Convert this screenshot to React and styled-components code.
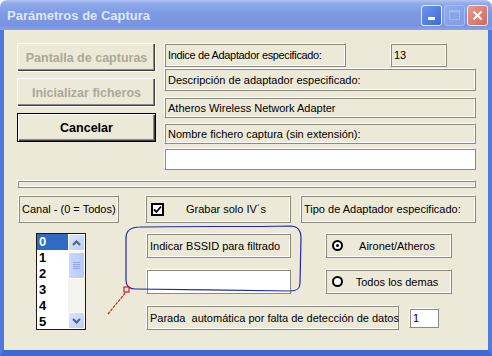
import React from 'react'
import styled, { createGlobalStyle, css } from 'styled-components'

const Global = createGlobalStyle`
  html, body { margin: 0; padding: 0; background: #fff; }
  body { font-family: "Liberation Sans", Arial, sans-serif; font-size: 11px; color: #000; }
`

// shared 3D frame used by the static labels, the boxes and the separator
const frame = css`
  box-sizing: border-box;
  border: 1px solid;
  border-color: #fdfdfb #8d8b80 #8d8b80 #fdfdfb;
  box-shadow: inset 1px 1px #8d8b80, inset -1px -1px #fdfdfb;
`

const Window = styled.div`
  position: relative;
  width: 492px;
  height: 356px;
  display: flex;
  flex-direction: column;
`

const TitleBar = styled.div`
  height: 30px;
  box-sizing: border-box;
  border-radius: 7px 7px 0 0;
  background: linear-gradient(#b1c5f2 0%, #8faaeb 12%, #7e9ae5 45%, #7893e2 85%, #8aa4e8 100%);
  display: flex;
  align-items: center;
  padding: 0 4px 0 7px;
`

const Title = styled.div`
  flex: 1;
  font-weight: bold;
  font-size: 13px;
  color: #dfe7fa;
  padding-top: 1px;
`

const CapButton = styled.div`
  width: 21px;
  height: 21px;
  box-sizing: border-box;
  border: 1px solid ${p => (p.faded ? '#a9bdf0' : '#e6ecfb')};
  border-radius: 3px;
  margin-left: 2px;
  display: flex;
  align-items: center;
  justify-content: center;
  background: ${p =>
    p.variant === 'close'
      ? 'linear-gradient(135deg, #e79a8e, #cf6b5c)'
      : p.faded
      ? 'linear-gradient(135deg, #93ade9, #7f9be3)'
      : 'linear-gradient(135deg, #6f95ec, #3e69dc)'};
`

const Client = styled.div`
  flex: 1;
  background: #ece9d8;
  border-left: 4px solid #5079db;
  border-right: 4px solid #5079db;
  border-bottom: 6px solid #3f68d3;
  padding: 13px 0 0 13px;
  display: flex;
  flex-direction: column;
`

const TopSection = styled.div`
  display: flex;
  gap: 8px;
`

const ButtonColumn = styled.div`
  display: flex;
  flex-direction: column;
  gap: 6px;
  width: 139px;
`

const Button = styled.div`
  height: 29px;
  box-sizing: border-box;
  background: #ece9d8;
  display: flex;
  align-items: center;
  justify-content: center;
  font-weight: bold;
  font-size: 12.5px;
  color: ${p => (p.disabled ? '#aca899' : '#000')};
  border: 1px solid ${p => (p.primary ? '#000' : '#fdfdfb')};
  box-shadow: ${p =>
    p.primary
      ? 'inset 1px 1px #fdfdfb, inset -1px -1px #404040, inset -2px -2px #8d8b80'
      : 'inset -1px -1px #404040, inset -2px -2px #8d8b80'};
`

const InfoColumn = styled.div`
  display: flex;
  flex-direction: column;
  width: 312px;
`

const InfoRow = styled.div`
  display: flex;
  align-items: center;
  margin-top: ${p => p.top || 0}px;
`

const Label = styled.div`
  ${frame};
  width: ${p => (p.w ? `${p.w}px` : '100%')};
  height: ${p => p.h || 22}px;
  margin-left: ${p => p.ml || 0}px;
  background: ${p => (p.white ? '#fff' : '#ece9d8')};
  display: flex;
  align-items: center;
  padding-left: 3px;
  white-space: pre;
  letter-spacing: ${p => p.ls || 0}px;
  flex-shrink: 0;
`

const Separator = styled.div`
  ${frame};
  width: 459px;
  height: 8px;
  margin-top: 10px;
`

const OptionsRow = styled.div`
  display: flex;
  margin-top: 7px;
  height: 28px;
`

const Panel = styled.div`
  ${frame};
  width: ${p => p.w}px;
  height: ${p => (p.h ? `${p.h}px` : 'auto')};
  margin-left: ${p => p.ml || 0}px;
  display: flex;
  align-items: center;
  padding-left: ${p => p.pl || 3}px;
  flex-shrink: 0;
`

const CenterText = styled.span`
  flex: 1;
  text-align: center;
  padding-right: ${p => p.pr || 0}px;
`

const CheckBox = styled.div`
  width: 13px;
  height: 13px;
  box-sizing: border-box;
  border: 2px solid #000;
  background: #fff;
  display: flex;
  align-items: center;
  justify-content: center;
`

const Radio = styled.div`
  width: 11px;
  height: 11px;
  box-sizing: border-box;
  border: 2px solid #000;
  border-radius: 50%;
  background: #fff;
  display: flex;
  align-items: center;
  justify-content: center;
  &::after {
    content: '';
    display: ${p => (p.checked ? 'block' : 'none')};
    width: 3px;
    height: 3px;
    border-radius: 50%;
    background: #000;
  }
`

const LowerGrid = styled.div`
  display: grid;
  grid-template-columns: 50px 145px 127px;
  grid-template-rows: 25px 25px 25px;
  column-gap: 60px;
  row-gap: 11px;
  margin: 10px 0 0 19px;
`

const GridSlot = styled.div`
  grid-column: ${p => p.col};
  grid-row: ${p => p.row};
  display: flex;
  align-items: center;
  margin-left: ${p => p.ml || 0}px;
`

const ListBox = styled.div`
  grid-column: 1;
  grid-row: 1 / 4;
  box-sizing: border-box;
  border: 1px solid #1a1a1a;
  background: #fff;
  display: flex;
`

const Items = styled.div`
  flex: 1;
  display: flex;
  flex-direction: column;
  overflow: hidden;
`

const Item = styled.div`
  height: 16px;
  line-height: 16px;
  padding-left: 2px;
  font-weight: bold;
  font-size: 13px;
  background: ${p => (p.selected ? '#316ac5' : 'transparent')};
  color: ${p => (p.selected ? '#fff' : '#000')};
`

const ScrollBar = styled.div`
  width: 17px;
  background: #f4f3ee;
  display: flex;
  flex-direction: column;
  justify-content: space-between;
`

const ScrollButton = styled.div`
  height: 17px;
  box-sizing: border-box;
  border: 1px solid #fff;
  border-radius: 2px;
  background: linear-gradient(135deg, #dbe6fd, #b9cdf8);
  display: flex;
  align-items: center;
  justify-content: center;
`

const Thumb = styled.div`
  height: 27px;
  margin-top: 1px;
  box-sizing: border-box;
  border: 1px solid #fff;
  border-radius: 2px;
  background: linear-gradient(90deg, #c9d8fb, #b7cbf7);
  display: flex;
  flex-direction: column;
  align-items: center;
  justify-content: center;
  gap: 1px;
  & > i { display: block; width: 7px; height: 1px; background: #8ea6de; }
`

const Track = styled.div`
  flex: 1;
`

const Overlay = styled.svg`
  position: absolute;
  left: 0;
  top: 0;
  pointer-events: none;
`

const Chevron = ({ up }) => (
  <svg width="9" height="6" viewBox="0 0 9 6">
    <path d={up ? 'M1 5 L4.5 1.5 L8 5' : 'M1 1 L4.5 4.5 L8 1'} fill="none" stroke="#4d6185" strokeWidth="2" />
  </svg>
)

export default function App() {
  return (
    <>
      <Global />
      <Window>
        <TitleBar>
          <Title>Parámetros de Captura</Title>
          <CapButton>
            <svg width="8" height="10" viewBox="0 0 8 10"><rect x="0" y="7" width="7" height="3" fill="#fff" /></svg>
          </CapButton>
          <CapButton faded>
            <svg width="11" height="10" viewBox="0 0 11 10"><rect x="0.5" y="0.5" width="10" height="9" fill="none" stroke="#a4b9ee" strokeWidth="1" /><rect x="0.5" y="0.5" width="10" height="2" fill="#a4b9ee" /></svg>
          </CapButton>
          <CapButton variant="close">
            <svg width="11" height="11" viewBox="0 0 11 11"><path d="M1.5 1.5 L9.5 9.5 M9.5 1.5 L1.5 9.5" stroke="#fff" strokeWidth="2" /></svg>
          </CapButton>
        </TitleBar>
        <Client>
          <TopSection>
            <ButtonColumn>
              <Button disabled>Pantalla de capturas</Button>
              <Button disabled>Inicializar ficheros</Button>
              <Button primary>Cancelar</Button>
            </ButtonColumn>
            <InfoColumn>
              <InfoRow>
                <Label w={182} h={24} ls={-0.35}>Indice de Adaptador especificado:</Label>
                <Label w={57} h={24} ml={44}>13</Label>
              </InfoRow>
              <InfoRow top={1}><Label h={23}>Descripción de adaptador especificado:</Label></InfoRow>
              <InfoRow top={6}><Label h={21}>Atheros Wireless Network Adapter</Label></InfoRow>
              <InfoRow top={5}><Label h={21}>Nombre fichero captura (sin extensión):</Label></InfoRow>
              <InfoRow top={4}><Label h={22} white /></InfoRow>
            </InfoColumn>
          </TopSection>
          <Separator />
          <OptionsRow>
            <Panel w={101} ml={1}>Canal - (0 = Todos)</Panel>
            <Panel w={146} ml={26} pl={5}>
              <CheckBox>
                <svg width="9" height="9" viewBox="0 0 9 9"><path d="M1 4.5 L3.5 7 L8 1.5" fill="none" stroke="#000" strokeWidth="1.8" /></svg>
              </CheckBox>
              <CenterText pr={2}>Grabar solo IV´s</CenterText>
            </Panel>
            <Panel w={176} ml={9}>Tipo de Adaptador especificado:</Panel>
          </OptionsRow>
          <LowerGrid>
            <ListBox>
              <Items>
                {['0', '1', '2', '3', '4', '5'].map((n, i) => (
                  <Item key={n} selected={i === 0}>{n}</Item>
                ))}
              </Items>
              <ScrollBar>
                <div>
                  <ScrollButton><Chevron up /></ScrollButton>
                  <Thumb><i /><i /><i /><i /></Thumb>
                </div>
                <Track />
                <ScrollButton><Chevron /></ScrollButton>
              </ScrollBar>
            </ListBox>
            <GridSlot col={2} row={1}><Label h={25}>Indicar BSSID para filtrado</Label></GridSlot>
            <GridSlot col={2} row={2}><Label h={25} white /></GridSlot>
            <GridSlot col={3} row={1} ml={-26}>
              <Panel w={127} h={25} pl={6}>
                <Radio checked />
                <CenterText>Aironet/Atheros</CenterText>
              </Panel>
            </GridSlot>
            <GridSlot col={3} row={2} ml={-26}>
              <Panel w={127} h={25} pl={6}>
                <Radio />
                <CenterText>Todos los demas</CenterText>
              </Panel>
            </GridSlot>
            <GridSlot col="2 / 4" row={3}>
              <Label w={253} h={25}>Parada  automática por falta de detección de datos</Label>
              <Label w={30} h={20} ml={10} white>1</Label>
            </GridSlot>
          </LowerGrid>
        </Client>
        <Overlay width="492" height="356" viewBox="0 0 492 356">
          <path
            d="M140 227 C180 226 250 227 290 226 C298 226 301 231 301 238 L300 283 C300 289 297 291 290 291 C250 290 180 290 135 289 C129 289 126 286 126 280 L126 238 C126 230 131 227 140 227 Z"
            fill="none"
            stroke="#1f2aa8"
            strokeWidth="1.2"
          />
          <path d="M108 314 L126 292" stroke="#d42020" strokeWidth="1.2" strokeDasharray="3 1" />
          <rect x="124" y="287" width="5" height="5" fill="none" stroke="#d42020" strokeWidth="1.2" />
        </Overlay>
      </Window>
    </>
  )
}
